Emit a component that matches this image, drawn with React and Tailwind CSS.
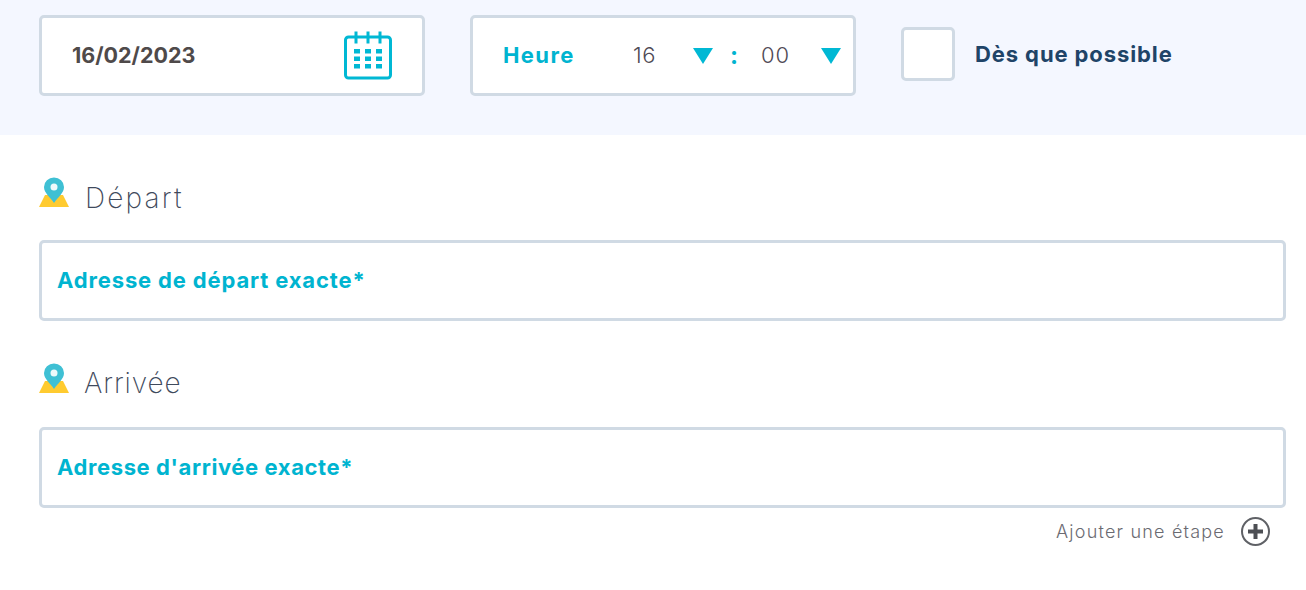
import React from "react";

function Calendar() {
  return (
    <svg width="50" height="50" viewBox="0 0 50 50" fill="none">
      <rect x="2.5" y="6" width="45" height="41" rx="3" stroke="#00b8d4" strokeWidth="3" />
      <path d="M13 0.5v12M25 0.5v12M37 0.5v12" stroke="#00b8d4" strokeWidth="3" />
      <g fill="#00b8d4">
        <rect x="11" y="18" width="6" height="4.5" />
        <rect x="22" y="18" width="6" height="4.5" />
        <rect x="33" y="18" width="6" height="4.5" />
        <rect x="11" y="25.5" width="6" height="4.5" />
        <rect x="22" y="25.5" width="6" height="4.5" />
        <rect x="33" y="25.5" width="6" height="4.5" />
        <rect x="11" y="33" width="6" height="4.5" />
        <rect x="22" y="33" width="6" height="4.5" />
        <rect x="33" y="33" width="6" height="4.5" />
      </g>
    </svg>
  );
}

function Pin() {
  return (
    <svg width="30" height="32" viewBox="0 0 30 32">
      <path d="M6 18h18l6 12H0z" fill="#ffcb30" />
      <path d="M15 26c-4-6-10-10-10-16a10 9.5 0 0 1 20 0c0 6-6 10-10 16z" fill="#3fc0d4" />
      <circle cx="15" cy="10" r="3.5" fill="#eef9fb" />
    </svg>
  );
}

function Arrow() {
  return <span className="w-0 h-0 border-l-[10px] border-r-[10px] border-t-[16px] border-l-transparent border-r-transparent border-t-[#00b8d4]" />;
}

function Address({ label, title, rowClass, titleClass, labelClass, boxClass }) {
  return (
    <div>
      <div className={`flex items-center h-[32px] ${rowClass}`}>
        <Pin />
        <span className={`text-[28px] font-extralight text-[#3f4a5c] leading-none ${titleClass}`}>{title}</span>
      </div>
      <div className={`h-[81px] border-[3px] border-[#d0dae4] rounded-[5px] bg-white flex items-center pl-[15px] ${boxClass}`}>
        <span className={`text-[22px] font-bold text-[#00b4d0] ${labelClass}`}>{label}</span>
      </div>
    </div>
  );
}

export default function App() {
  return (
    <div className="h-[590px] bg-white font-['Inter','Noto_Sans',sans-serif] overflow-hidden">
      {/* Date / time band */}
      <div className="h-[135px] bg-[#f4f7ff] pl-[39px] pt-[15px] flex items-start gap-[45px]">
        <div className="w-[386px] h-[81px] border-[3px] border-[#d0dae4] rounded-[5px] bg-white flex items-center justify-between pl-[30px] pr-[29px]">
          <span className="text-[21.5px] font-bold text-[#4f4a4a]">16/02/2023</span>
          <Calendar />
        </div>
        <div className="w-[386px] h-[81px] border-[3px] border-[#d0dae4] rounded-[5px] bg-white flex items-center pl-[30px]">
          <span className="w-[130px] text-[22px] font-bold tracking-[1.4px] text-[#00b4d0]">Heure</span>
          <span className="w-[60px] text-[22px] font-light tracking-[0.5px] text-[#4f4a55]">16</span>
          <Arrow />
          <span className="ml-[17px] w-[31px] text-[24px] font-bold text-[#00b4d0]">:</span>
          <span className="w-[60px] text-[22px] font-light tracking-[1px] text-[#4f4a55]">00</span>
          <Arrow />
        </div>
        <div className="mt-[12px] flex items-center gap-[20px]">
          <div className="w-[54px] h-[54px] border-[3px] border-[#d0dae4] rounded-[5px] bg-white" />
          <span className="text-[22px] font-bold tracking-[0.9px] text-[#1f4468]">Dès que possible</span>
        </div>
      </div>

      {/* Addresses */}
      <div className="pl-[39px] pr-[20px] pt-[42px] flex flex-col gap-[43px]">
        <Address
          title="Départ"
          rowClass="gap-[16px]"
          titleClass="pt-[10px] tracking-[2.2px]"
          boxClass="mt-[31px]"
          labelClass="tracking-[0.85px]"
          label="Adresse de départ exacte*"
        />
        <Address
          title="Arrivée"
          rowClass="gap-[15px] -mt-[1px]"
          titleClass="pt-[8px] tracking-[0.9px]"
          boxClass="mt-[32px]"
          labelClass="tracking-[0.6px]"
          label="Adresse d'arrivée exacte*"
        />
      </div>
      <div className="mt-[8px] pr-[35px] flex items-center justify-end gap-[15px]">
        <span className="text-[18px] font-light tracking-[1.2px] text-[#6b6b72]">Ajouter une étape</span>
        <svg width="31" height="31" viewBox="0 0 31 31" fill="none">
          <circle cx="15.5" cy="15.5" r="13.5" stroke="#5f6166" strokeWidth="2" />
          <path d="M15.5 8v15M8 15.5h15" stroke="#4d4f54" strokeWidth="4" />
        </svg>
      </div>
    </div>
  );
}
